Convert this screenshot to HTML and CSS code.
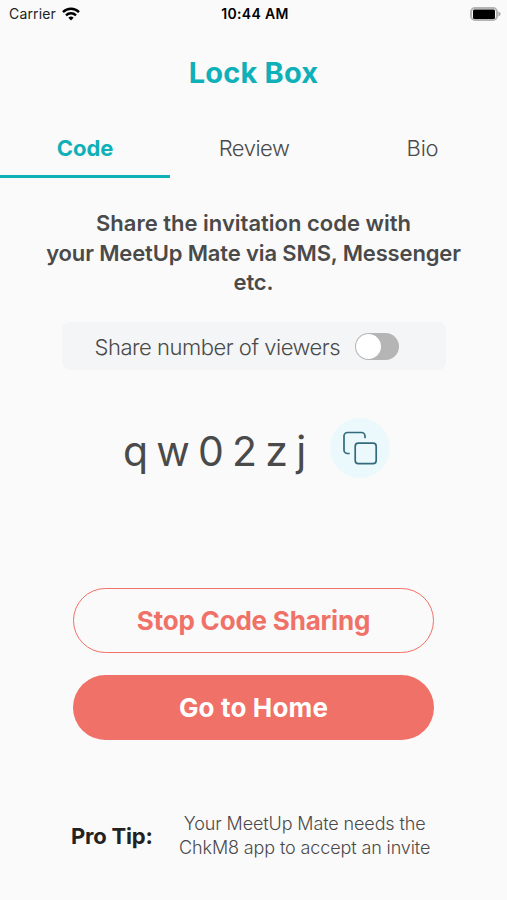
FILE: index.html
```html
<!DOCTYPE html>
<html lang="en">
<head>
<meta charset="utf-8">
<title>Lock Box</title>
<link rel="stylesheet" href="styles.css">
</head>
<body>
<header class="status">
  <div class="carrier"><span>Carrier</span>
    <svg class="wifi" viewBox="0 0 18 14" fill="none" stroke="#000" stroke-width="2.4"><path d="M1 5.1a11.4 11.4 0 0 1 16 0M4 8.3a7.1 7.1 0 0 1 10 0"/><path d="M6.4 10.7a3.7 3.7 0 0 1 5.2 0L9 13.6z" fill="#000" stroke="none"/></svg>
  </div>
  <time class="time">10:44 AM</time>
  <svg class="battery" viewBox="0 0 31 14"><rect x="1" y="1" width="26" height="12" rx="4" fill="#fafafa" stroke="#b4b4b4" stroke-width="2"/><rect x="3" y="2.500" width="22" height="9.500" rx="1.500"/><path d="M28.400 4.600c3 1 3 3.800 0 4.800z" fill="#aaa"/></svg>
</header>
<h1 class="title">Lock Box</h1>
<nav class="tabs">
  <a class="tab active">Code</a>
  <a class="tab review">Review</a>
  <a class="tab">Bio</a>
</nav>
<main class="content">
  <p class="intro">Share the invitation code with<br><span class="tight">your MeetUp Mate via SMS, Messenger</span><br><span class="tight">etc.</span></p>
  <div class="viewers"><span class="viewers-label">Share number of viewers</span><span class="switch"></span></div>
  <div class="code-row">
    <span class="code">qw02zj</span>
    <button class="copy" aria-label="Copy"><svg viewBox="0 0 36 36" fill="none" stroke="#336b7c" stroke-width="1.7" stroke-linecap="round"><path d="M7 23.500H5.500A3.500 3.500 0 0 1 2 20V6a3.500 3.500 0 0 1 3.500-3.500H19.500A3.500 3.500 0 0 1 23 6v1.500"/><rect x="13.200" y="13.200" width="21" height="20.500" rx="3.200"/></svg></button>
  </div>
  <div class="actions">
    <button class="btn outline">Stop Code Sharing</button>
    <button class="btn solid">Go to Home</button>
  </div>
  <footer class="tip"><strong>Pro Tip:</strong><p>Your MeetUp Mate needs the<br>ChkM8 app to accept an invite</p></footer>
</main>
</body>
</html>
```
FILE: styles.css
```css
* { box-sizing: border-box; }
body { margin: 0; width: 507px; height: 900px; overflow: hidden; background: #fafafa; color: #4a4a4a; font-family: Inter, "Liberation Sans", sans-serif; }
button { font: inherit; border: 0; padding: 0; margin: 0; }
.status { height: 28px; display: grid; grid-template-columns: 1fr auto 1fr; align-items: center; padding: 0 6px 1px 9px; font-size: 14px; color: #222; }
.carrier { display: flex; align-items: center; gap: 6px; letter-spacing: .15px; }
.wifi { width: 18px; height: 14px; }
.time { font-weight: 600; color: #000; letter-spacing: .3px; }
.battery { width: 31px; height: 14px; justify-self: end; }
.title { margin: 0; height: 90px; padding-bottom: 2px; display: flex; align-items: center; justify-content: center; font-size: 29px; font-weight: 700; color: #0fb0b8; letter-spacing: .2px; }
.tabs { height: 60px; display: grid; grid-template-columns: 170px 1fr 169px; }
.tab { display: flex; align-items: center; justify-content: center; padding-top: 2px; font-size: 22px; font-weight: 300; letter-spacing: -.2px; border-bottom: 3px solid transparent; }
.tab.review { letter-spacing: -.5px; }
.tab.active { font-weight: 700; color: #0fb0b8; border-color: #0fb0b8; letter-spacing: 0; }
.content { display: flex; flex-direction: column; align-items: center; }
.intro { margin: 31px 0 0; text-align: center; font-size: 22px; line-height: 29.5px; font-weight: 600; white-space: nowrap; }
.tight { letter-spacing: -.14px; }
.viewers { margin-top: 24.5px; width: 384px; height: 48px; border-radius: 8px; background: #f3f5f7; display: flex; align-items: center; padding-left: 33px; gap: 15px; font-size: 22px; font-weight: 300; white-space: nowrap; }
.viewers-label { width: 245px; letter-spacing: -.48px; padding-top: 2px; }
.switch { width: 44px; height: 27px; border-radius: 14px; background: #b5b5b5; padding: 1px; }
.switch::before { content: ""; display: block; width: 25px; height: 25px; border-radius: 50%; background: #fff; }
.code-row { margin: 48px 0 0 6px; width: 267px; height: 60px; display: flex; align-items: center; justify-content: space-between; }
.code { font-size: 41px; font-weight: 400; letter-spacing: 8.2px; padding-top: 6px; }
.copy { width: 60px; height: 60px; border-radius: 50%; background: #ebf8fc; display: grid; place-items: center; }
.copy svg { width: 36px; height: 36px; }
.actions { margin-top: 110px; display: grid; gap: 22px; }
.btn { width: 361px; height: 65px; border-radius: 33px; font-size: 26px; font-weight: 700; }
.outline { background: transparent; border: 1.5px solid #f07167; color: #f07167; letter-spacing: -.2px; }
.solid { background: #f07167; color: #fff; letter-spacing: .15px; }
.tip { margin-top: 71px; width: 365px; display: flex; align-items: center; gap: 25px; white-space: nowrap; }
.tip strong { font-size: 22px; color: #222; letter-spacing: -.2px; }
.tip p { margin: 0; width: 254px; padding-top: 1px; text-align: center; font-size: 18px; line-height: 24px; font-weight: 300; letter-spacing: -.12px; }
```
